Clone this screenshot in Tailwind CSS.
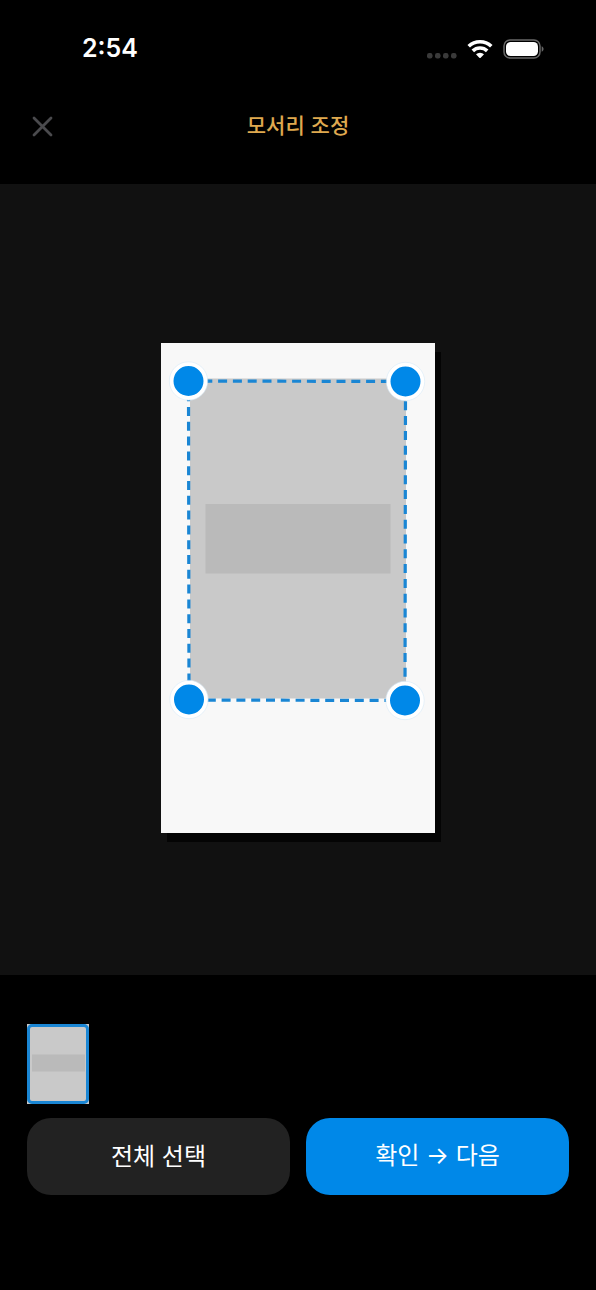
<!DOCTYPE html>
<html lang="ko">
<head>
<meta charset="utf-8">
<meta name="viewport" content="width=device-width, initial-scale=1">
<title>모서리 조정</title>
<script src="https://cdn.jsdelivr.net/npm/@tailwindcss/browser@4"></script>
</head>
<body class="bg-black font-['Noto_Sans_CJK_KR',sans-serif]">
<div class="flex min-h-screen flex-col bg-black">
  <div class="flex h-24 items-center justify-between pt-px pr-[51px] pl-[82px]">
    <time class="font-['Inter',sans-serif] text-[25px] font-semibold text-white">2:54</time>
    <div class="flex items-center">
      <svg class="h-7 w-[30px]" viewBox="0 0 30 28" fill="#3a3a3a" aria-hidden="true">
        <rect x="0" y="18" width="5.500" height="5.5" rx="2.2"/><rect x="8" y="18" width="5.500" height="5.5" rx="2.2"/><rect x="16" y="18" width="5.500" height="5.5" rx="2.2"/><rect x="24" y="18" width="5.500" height="5.5" rx="2.2"/>
      </svg>
      <svg class="ml-2.5 h-7 w-[26px]" viewBox="0 0 26 28" fill="none" stroke="#fff" stroke-width="3.6" aria-label="Wi-Fi">
        <path d="M1.7 11.3a16.2 16.2 0 0 1 22.6 0"/><path d="M5.800 15.900a10.300 10.300 0 0 1 14.400 0"/>
        <path d="M9 19.300a5.8 5.8 0 0 1 8 0l-3.300 3.500q-.7.6-1.400 0Z" fill="#fff" stroke="none"/>
      </svg>
      <svg class="ml-2.5 h-7 w-[42px]" viewBox="0 0 42 28" aria-label="배터리">
        <rect x="1" y="5" width="36" height="18" rx="6" fill="none" stroke="#686868" stroke-width="1.5"/>
        <rect x="3" y="7" width="32" height="14" rx="4.5" fill="#fff"/>
        <path d="M38.7 11.3c2.5 1 2.5 4.400 0 5.400Z" fill="#686868"/>
      </svg>
    </div>
  </div>
  <header class="grid h-[88px] grid-cols-[30px_1fr_30px] items-start px-[27px] pt-3">
    <button type="button" aria-label="닫기" class="flex h-9 items-center justify-center">
      <svg class="size-[30px]" viewBox="0 0 30 30" fill="none" stroke="#4a4a4d" stroke-width="2.8" stroke-linecap="round"><path d="M7 7l17 17M24 7L7 24"/></svg>
    </button>
    <h1 class="text-center text-[21px] leading-8 font-medium text-[#dfa94f]">모서리 조정</h1>
  </header>
  <main class="flex h-[791px] items-center justify-center bg-[#111] pt-4">
    <svg class="h-[490px] w-[274px] overflow-visible" viewBox="0 0 274 490" role="img" aria-label="문서 모서리">
      <rect x="6" y="9" width="274" height="490" fill="#040404"/>
      <rect width="274" height="490" fill="#f8f8f8"/>
      <rect x="29" y="35.500" width="216" height="320" fill="#c9c9c9"/>
      <rect x="44.500" y="161" width="185" height="69.500" fill="#bababa"/>
      <path d="M27.500 38L244.500 38.500L244 357.500L28 357Z" fill="none" stroke="#1a86d4" stroke-width="3.2" stroke-dasharray="9 5.800"/>
      <g fill="#0088e8" stroke="#fff" stroke-width="4">
        <circle cx="27.500" cy="38" r="17"/><circle cx="244.500" cy="38.500" r="17"/><circle cx="244" cy="357.500" r="17"/><circle cx="28" cy="356.500" r="17"/>
      </g>
      <g fill="none" stroke="#d9ebf8" stroke-width=".6">
        <circle cx="27.500" cy="38" r="19.200"/><circle cx="244.500" cy="38.500" r="19.200"/><circle cx="244" cy="357.500" r="19.200"/><circle cx="28" cy="356.500" r="19.200"/>
      </g>
    </svg>
  </main>
  <footer class="px-[27px] pt-[49px]">
    <button type="button" aria-label="1페이지" class="block bg-[#c9c9c9]">
      <svg class="h-20 w-[62px]" viewBox="0 0 62 80"><rect x="5" y="30.500" width="53" height="17" fill="#bababa"/><rect x="1.500" y="1.500" width="59" height="77" rx="3.500" fill="none" stroke="#1a86d4" stroke-width="3"/></svg>
    </button>
    <div class="mt-3.5 grid grid-cols-2 gap-4 text-2xl text-white">
      <button type="button" class="h-[77px] rounded-3xl bg-[#222] pb-1">전체 선택</button>
      <button type="button" class="h-[77px] rounded-3xl bg-[#0088e8] pb-1">확인 <span class="font-['Inter',sans-serif]">→</span> 다음</button>
    </div>
  </footer>
</div>
</body>
</html>
